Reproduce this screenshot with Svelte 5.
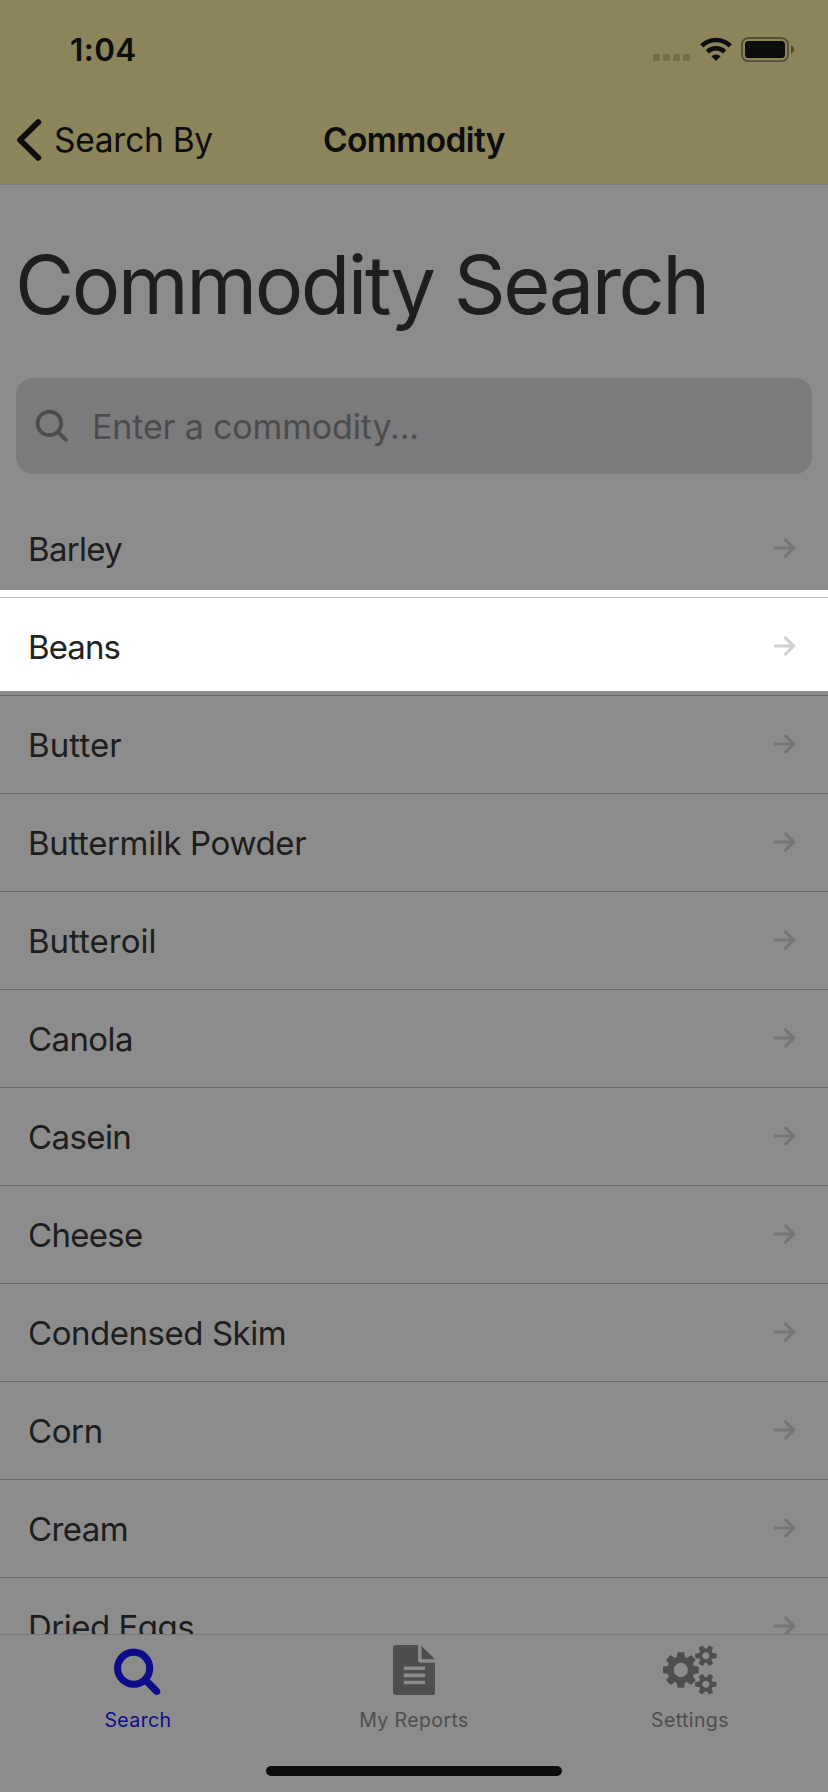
<script>
  const commodities = [
    { name: 'Barley', tracking: -0.7 },
    { name: 'Beans', tracking: -0.9 },
    { name: 'Butter', tracking: 0.1 },
    { name: 'Buttermilk Powder', tracking: -0.36 },
    { name: 'Butteroil', tracking: 0 },
    { name: 'Canola', tracking: -0.6 },
    { name: 'Casein', tracking: -0.6 },
    { name: 'Cheese', tracking: -0.7 },
    { name: 'Condensed Skim', tracking: -0.46 },
    { name: 'Corn', tracking: -0.4 },
    { name: 'Cream', tracking: -0.6 },
    { name: 'Dried Eggs', tracking: -0.5 }
  ];
  const smallGear =
    'v140q0 16-149 31-12 27-30 52 51 113 51 138 0 4-4 7-122 71-124 71-8 0-46-47t-52-68q-20 2-30 2t-30-2q-14 21-52 68t-46 47q-2 0-124-71-4-3-4-7 0-25 51-138-18-25-30-52-149-15-149-31v-140q0-16 149-31 13-29 30-52-51-113-51-138 0-4 4-7 4-2 35-20t59-34 30-16q8 0 46 46.5t52 67.5q20-2 30-2t30 2q51-71 92-112l6-2q4 0 124 70 4 3 4 7 0 25-51 138 17 23 30 52 149 15 149 31z';
  const tabs = [
    {
      label: 'Search', width: 1664, active: true,
      path: 'M1152 832q0-185-131.5-316.5t-316.5-131.5-316.5 131.5-131.5 316.5 131.5 316.5 316.5 131.5 316.5-131.5 131.5-316.5zm512 832q0 52-38 90t-90 38q-54 0-90-38l-343-342q-179 124-399 124-143 0-273.5-55.5t-225-150-150-225-55.5-273.5 55.5-273.5 150-225 225-150 273.5-55.5 273.5 55.5 225 150 150 225 55.5 273.5q0 220-124 399l343 343q37 37 37 90z'
    },
    {
      label: 'My Reports', width: 1536, active: false,
      path: 'M1468 476q14 14 28 36h-472v-472q22 14 36 28zm-476 164h544v1056q0 40-28 68t-68 28h-1344q-40 0-68-28t-28-68v-1600q0-40 28-68t68-28h800v544q0 40 28 68t68 28zm160 736v-64q0-14-9-23t-23-9h-704q-14 0-23 9t-9 23v64q0 14 9 23t23 9h704q14 0 23-9t9-23zm0-256v-64q0-14-9-23t-23-9h-704q-14 0-23 9t-9 23v64q0 14 9 23t23 9h704q14 0 23-9t9-23zm0-256v-64q0-14-9-23t-23-9h-704q-14 0-23 9t-9 23v64q0 14 9 23t23 9h704q14 0 23-9t9-23z'
    },
    {
      label: 'Settings', width: 1920, active: false,
      path: 'M896 896q0-106-75-181t-181-75-181 75-75 181 75 181 181 75 181-75 75-181zm768 512q0-52-38-90t-90-38-90 38-38 90q0 53 37.5 90.5t90.5 37.5 90.5-37.5 37.5-90.5zm0-1024q0-52-38-90t-90-38-90 38-38 90q0 53 37.5 90.5t90.5 37.5 90.5-37.5 37.5-90.5zm-384 421v185q0 10-7 19.5t-16 10.5l-155 24q-11 35-32 76 34 48 90 115 7 11 7 20 0 12-7 19-23 30-82.5 89.5t-78.5 59.5q-11 0-21-7l-115-90q-37 19-77 31-11 108-23 155-7 24-30 24h-186q-11 0-20-7.5t-10-17.5l-23-153q-34-10-75-31l-118 89q-7 7-20 7-11 0-21-8-144-133-144-160 0-9 7-19 10-14 41-53t47-61q-23-44-35-82l-152-24q-10-1-17-9.5t-7-19.5v-185q0-10 7-19.5t16-10.5l155-24q11-35 32-76-34-48-90-115-7-11-7-20 0-12 7-20 22-30 82-89t79-59q11 0 21 7l115 90q34-18 77-32 11-108 23-154 7-24 30-24h186q11 0 20 7.5t10 17.5l23 153q34 10 75 31l118-89q8-7 20-7 11 0 21 8 144 133 144 160 0 8-7 19-12 16-42 54t-45 60q23 48 34 82l152 23q10 2 17 10.5t7 19.5zm640 533' + smallGear + 'M1920 314' + smallGear
    }
  ];
</script>

<div class="screen">
  <header>
    <div class="status">
      <span class="time">1:04</span>
      <div class="indicators">
        <div class="signal"><i></i><i></i><i></i><i></i></div>
        <svg class="wifi" width="32" height="24" viewBox="0 0 32 24">
          <g fill="none" stroke="#000" stroke-width="4.6">
            <path d="M1.7 8.8a20.4 20.4 0 0 1 28.6 0" />
            <path d="M7.4 14.8a12.3 12.3 0 0 1 17.2 0" />
          </g>
          <path d="M16 24l-4.6-4.7a6.6 6.6 0 0 1 9.2 0z" />
        </svg>
        <svg width="54" height="26" viewBox="0 0 54 26">
          <rect x="1" y="1" width="46" height="23.2" rx="6.5" fill="none" stroke="#000" stroke-opacity=".45" stroke-width="1.8" />
          <rect x="4" y="4" width="40" height="17" rx="3.6" />
          <path d="M50 8.3c4 1.5 4 7.1 0 8.6z" fill-opacity=".5" />
        </svg>
      </div>
    </div>
    <nav>
      <span class="back">
        <svg width="26" height="44" viewBox="0 0 26 44">
          <path d="M22.3 4.2L4 22l18.3 17.8" fill="none" stroke="#000" stroke-width="5.8" stroke-linecap="round" stroke-linejoin="round" />
        </svg>
        <span class="back-label">Search By</span>
      </span>
      <span class="title">Commodity</span>
    </nav>
  </header>

  <main>
    <h1>Commodity Search</h1>
    <div class="field">
      <svg width="34" height="34" viewBox="0 0 34 34" fill="none" stroke="#7f7f7f">
        <circle cx="14.4" cy="14.4" r="11.8" stroke-width="3.7" />
        <path d="M22.8 22.8l8 8" stroke-width="4" stroke-linecap="round" />
      </svg>
      <span>Enter a commodity...</span>
    </div>
    <ul>
      {#each commodities as { name, tracking }}
        <li>
          <span style="letter-spacing: {tracking}px">{name}</span>
          <svg width="24" height="22" viewBox="0 0 24 22" fill="none" stroke="#d1d1d3" stroke-width="3.2">
            <path d="M1 11h20M11.5 1.8l9.2 9.2-9.2 9.2" />
          </svg>
        </li>
      {/each}
    </ul>
  </main>

  <footer>
    <div class="tabs">
      {#each tabs as tab}
        <div class="tab" class:active={tab.active}>
          <svg width={tab.width / 35.84} height="50" viewBox="0 0 {tab.width} 1792"><path d={tab.path} fill="currentColor" /></svg>
          <span>{tab.label}</span>
        </div>
      {/each}
    </div>
    <div class="home"></div>
  </footer>

  <div class="spotlight"></div>
</div>

<style>
  :global(body) { background: #8c8c8c; }
  .screen {
    position: relative;
    width: 828px;
    height: 1792px;
    overflow: hidden;
    display: flex;
    flex-direction: column;
    background: #fff;
    color: #222;
    font-family: Inter, "Liberation Sans", sans-serif;
  }
  header {
    flex: none;
    box-sizing: border-box;
    height: 185px;
    background: #ffee9c;
    border-bottom: 1px solid #dcdcdc;
    color: #000;
  }
  .status {
    display: flex;
    justify-content: space-between;
    height: 96px;
    padding: 0 33px 0 70px;
  }
  .time {
    margin-top: 31px;
    font-size: 31.5px;
    line-height: 38px;
    font-weight: 600;
    letter-spacing: .4px;
  }
  .indicators { display: flex; align-items: flex-start; padding-top: 37px; }
  .signal { display: flex; gap: 3px; margin: 17px 10px 0 0; }
  .signal i { width: 7px; height: 7px; border-radius: 1.5px; background: #000; opacity: .2; }
  .wifi { margin-right: 9px; }
  nav {
    display: grid;
    grid-template-columns: 1fr auto 1fr;
    align-items: center;
    height: 88px;
    font-size: 33.5px;
    line-height: 42px;
  }
  .back { display: flex; align-items: center; gap: 12px; padding-left: 16px; }
  .back-label { letter-spacing: -.27px; }
  .title { font-weight: 600; letter-spacing: -.65px; }
  main { flex: 1; min-height: 0; overflow: hidden; }
  h1 {
    margin: 50px 0 0 15px;
    font-size: 81px;
    line-height: 100px;
    font-weight: 400;
    letter-spacing: -2.5px;
    white-space: nowrap;
  }
  .field {
    display: flex;
    align-items: center;
    gap: 23px;
    height: 96px;
    margin: 43px 16px 0;
    padding: 0 19px;
    box-sizing: border-box;
    border-radius: 17px;
    background: #dcdce0;
    color: #7f7f7f;
    font-size: 34px;
    letter-spacing: -.14px;
  }
  ul { list-style: none; margin: 26px 0 0; padding: 0; }
  li {
    display: flex;
    align-items: center;
    justify-content: space-between;
    box-sizing: border-box;
    height: 98px;
    padding: 0 31px 0 28px;
    border-bottom: 1px solid #bbb;
    font-size: 33px;
    line-height: 40px;
  }
  li svg { margin-bottom: 2px; }
  footer {
    flex: none;
    display: flex;
    flex-direction: column;
    align-items: center;
    justify-content: space-between;
    box-sizing: border-box;
    height: 158px;
    padding-bottom: 16px;
    border-top: 1px solid #d8d8d8;
    background: #fff;
  }
  .tabs { display: grid; grid-template-columns: repeat(3, 1fr); width: 100%; }
  .tab {
    display: flex;
    flex-direction: column;
    align-items: center;
    padding-top: 10px;
    color: #828282;
    font-size: 19.5px;
    line-height: 24px;
    letter-spacing: .4px;
  }
  .tab span { margin-top: 13px; }
  .active { color: #00f; }
  .active svg { margin-right: 1px; }
  .home { width: 296px; height: 10px; border-radius: 5px; background: #000; }
  /* Highlights one row; its spread shadow dims the rest of the screen. */
  .spotlight {
    position: absolute;
    top: 590px;
    left: 0;
    width: 828px;
    height: 101px;
    box-shadow: 0 0 0 1800px rgba(26, 26, 26, .5);
  }
</style>
